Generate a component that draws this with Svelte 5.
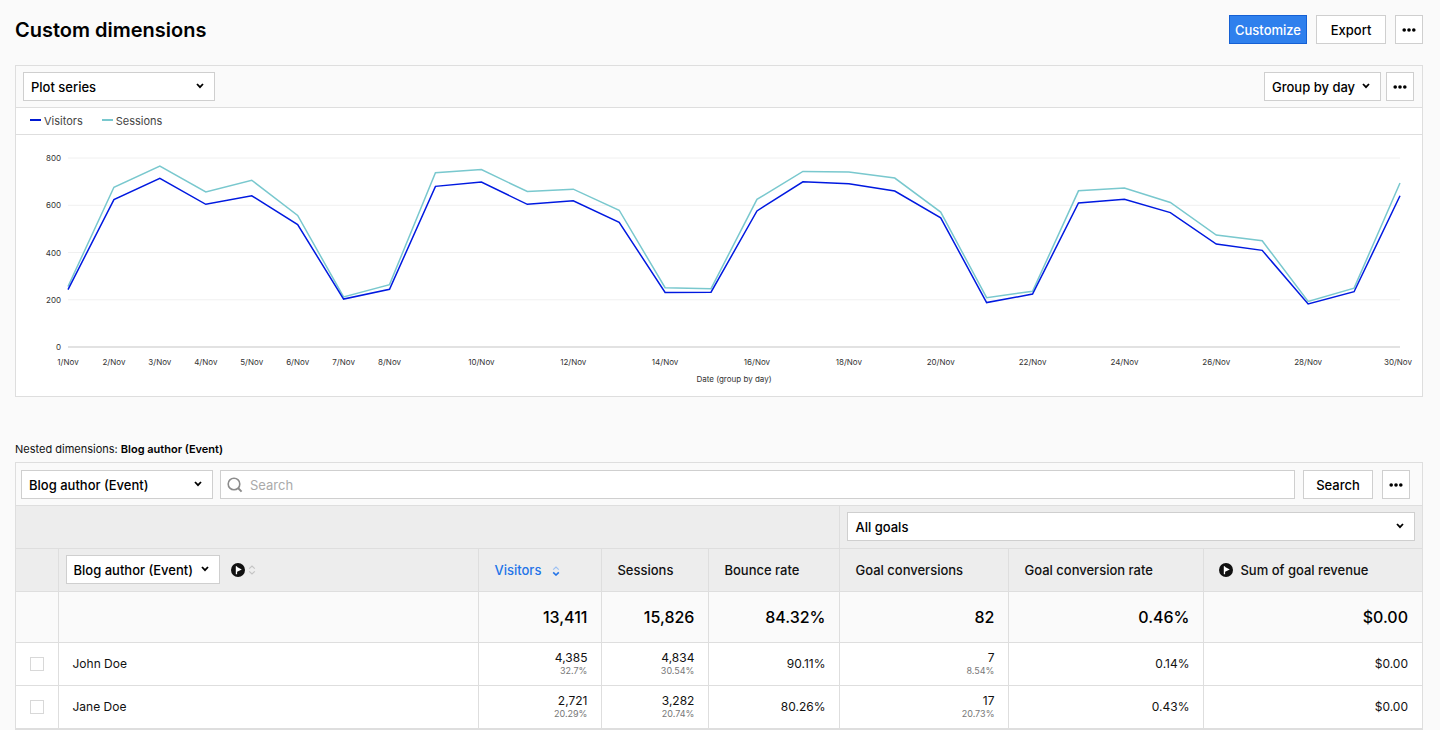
<script lang="ts">
  type Cell = { value: string; share?: string };

  const visitors = [
    243, 624, 714, 604, 640, 518, 203, 244, 680, 698, 604, 619, 528, 231, 232,
    576, 699, 691, 660, 547, 188, 224, 610, 625, 569, 436, 409, 182, 234, 640,
  ];
  const sessions = [
    256, 676, 766, 656, 706, 557, 212, 264, 738, 751, 658, 668, 579, 251, 247,
    625, 743, 741, 715, 571, 209, 236, 661, 673, 612, 474, 450, 193, 249, 694,
  ];
  const labelledDays = [1, 2, 3, 4, 5, 6, 7, 8, 10, 12, 14, 16, 18, 20, 22, 24, 26, 28, 30];
  const ticks = [0, 200, 400, 600, 800];

  const totals = ['13,411', '15,826', '84.32%', '82', '0.46%', '$0.00'];
  const rows: { name: string; cells: Cell[] }[] = [
    {
      name: 'John Doe',
      cells: [
        { value: '4,385', share: '32.7%' },
        { value: '4,834', share: '30.54%' },
        { value: '90.11%' },
        { value: '7', share: '8.54%' },
        { value: '0.14%' },
        { value: '$0.00' },
      ],
    },
    {
      name: 'Jane Doe',
      cells: [
        { value: '2,721', share: '20.29%' },
        { value: '3,282', share: '20.74%' },
        { value: '80.26%' },
        { value: '17', share: '20.73%' },
        { value: '0.43%' },
        { value: '$0.00' },
      ],
    },
  ];

  const chart = { left: 52, right: 22, top: 23, bottom: 212, height: 261 };
  let chartWidth = $state(1406);
  let query = $state('');

  let plotRight = $derived(chartWidth - chart.right);

  function x(day: number) {
    return chart.left + ((day - 1) / 29) * (plotRight - chart.left);
  }

  function y(value: number) {
    return chart.bottom - (value / 800) * (chart.bottom - chart.top);
  }

  function line(series: number[]) {
    return series.map((value, i) => `${x(i + 1)},${y(value)}`).join(' ');
  }
</script>

{#snippet chevron()}
  <svg class="chevron" width="8" height="6" viewBox="0 0 8 6" aria-hidden="true">
    <path d="M1 1l3 3.2L7 1" fill="none" stroke="#000" stroke-width="1.8" />
  </svg>
{/snippet}

{#snippet dots()}
  <svg width="14" height="4" viewBox="0 0 14 4" aria-hidden="true">
    <circle cx="2.2" cy="2" r="1.8" />
    <circle cx="7" cy="2" r="1.8" />
    <circle cx="11.8" cy="2" r="1.8" />
  </svg>
{/snippet}

{#snippet flag()}
  <svg class="flag" width="14" height="14" viewBox="0 0 14 14" aria-hidden="true">
    <circle cx="7" cy="7" r="7" fill="#111" />
    <path d="M4.8 3.2v8h1.3V8.8L10.8 6.4 6.1 4V3.2z" fill="#fff" />
  </svg>
{/snippet}

{#snippet sort()}
  <svg class="sort" width="8" height="10" viewBox="0 0 8 10" fill="none" aria-hidden="true">
    <path class="up" d="M1.2 3.6L4 1l2.8 2.6" />
    <path class="down" d="M1.2 6.4L4 9l2.8-2.6" />
  </svg>
{/snippet}

<main class="page">
  <header class="page-header">
    <h1>Custom dimensions</h1>
    <div class="actions">
      <button class="btn primary">Customize</button>
      <button class="btn">Export</button>
      <button class="btn icon" aria-label="More page actions">{@render dots()}</button>
    </div>
  </header>

  <section class="panel" aria-label="Chart">
    <div class="toolbar">
      <div class="select wide">
        <select aria-label="Plot series"><option>Plot series</option></select>
        {@render chevron()}
      </div>
      <div class="toolbar-end">
        <div class="select group">
          <select aria-label="Grouping"><option>Group by day</option></select>
          {@render chevron()}
        </div>
        <button class="btn icon" aria-label="More chart actions">{@render dots()}</button>
      </div>
    </div>

    <div class="legend">
      <span class="legend-item visitors">Visitors</span>
      <span class="legend-item sessions">Sessions</span>
    </div>

    <div class="chart" bind:clientWidth={chartWidth}>
      <svg width={chartWidth} height={chart.height} role="img" aria-label="Visitors and sessions by day">
        {#each ticks as tick}
          <line class="grid" class:axis={tick === 0} x1={chart.left} x2={plotRight} y1={y(tick)} y2={y(tick)} />
          <text x={chart.left - 7} y={y(tick) + 3} text-anchor="end">{tick}</text>
        {/each}
        <polyline class="series sessions" points={line(sessions)} />
        <polyline class="series visitors" points={line(visitors)} />
        {#each labelledDays as day}
          <text x={Math.min(x(day), chartWidth - 24)} y={chart.bottom + 18} text-anchor="middle">{day}/Nov</text>
        {/each}
        <text x={(chart.left + plotRight) / 2} y={chart.bottom + 35} text-anchor="middle">Date (group by day)</text>
      </svg>
    </div>
  </section>

  <p class="nested">Nested dimensions: <strong>Blog author (Event)</strong></p>

  <section class="panel" aria-label="Report table">
    <div class="toolbar table-toolbar">
      <div class="select wide">
        <select aria-label="Nested dimension"><option>Blog author (Event)</option></select>
        {@render chevron()}
      </div>
      <form class="search" onsubmit={(e) => e.preventDefault()}>
        <label class="search-box">
          <svg width="16" height="16" viewBox="0 0 16 16" fill="none" aria-hidden="true">
            <circle cx="7" cy="7" r="5.8" stroke="#8c8c8c" stroke-width="1.6" />
            <path d="M11 11l3.6 3.6" stroke="#8c8c8c" stroke-width="2" />
          </svg>
          <input type="text" placeholder="Search" aria-label="Search" bind:value={query} />
        </label>
        <button class="btn">Search</button>
      </form>
      <button class="btn icon" aria-label="More table actions">{@render dots()}</button>
    </div>

    <table>
      <colgroup>
        <col class="col-check" />
        <col />
        <col class="col-visitors" />
        <col class="col-sessions" />
        <col class="col-bounce" />
        <col class="col-conversions" />
        <col class="col-rate" />
        <col class="col-revenue" />
      </colgroup>
      <thead>
        <tr class="groups">
          <th colspan="5"></th>
          <th class="goals" colspan="3">
            <div class="select">
              <select aria-label="Goals"><option>All goals</option></select>
              {@render chevron()}
            </div>
          </th>
        </tr>
        <tr>
          <th></th>
          <th class="dimension">
            <div class="dimension-head">
              <div class="select fit">
                <select aria-label="Dimension"><option>Blog author (Event)</option></select>
                {@render chevron()}
              </div>
              {@render flag()}
              {@render sort()}
            </div>
          </th>
          <th class="sorted">Visitors {@render sort()}</th>
          <th>Sessions</th>
          <th>Bounce rate</th>
          <th>Goal conversions</th>
          <th>Goal conversion rate</th>
          <th>{@render flag()}Sum of goal revenue</th>
        </tr>
      </thead>
      <tbody>
        <tr class="totals">
          <td></td>
          <td></td>
          {#each totals as total}
            <td>{total}</td>
          {/each}
        </tr>
        {#each rows as row}
          <tr>
            <td class="check"><input type="checkbox" aria-label="Select {row.name}" /></td>
            <td class="name">{row.name}</td>
            {#each row.cells as cell}
              <td>
                {cell.value}
                {#if cell.share}<small>{cell.share}</small>{/if}
              </td>
            {/each}
          </tr>
        {/each}
      </tbody>
    </table>
  </section>
</main>

<style>
  :global(body) {
    margin: 0;
    background: #fafafa;
  }

  .page {
    padding: 15px 17px 0 15px;
    font-family: Inter, 'Liberation Sans', sans-serif;
    font-size: 13px;
    color: #111;
  }

  .page *,
  .page {
    box-sizing: border-box;
  }

  .page-header {
    display: flex;
    align-items: flex-start;
    justify-content: space-between;
    margin-bottom: 19px;
  }

  h1 {
    margin: 0;
    font-size: 20px;
    line-height: 31px;
    font-weight: 600;
    color: #000;
  }

  .actions {
    display: flex;
    gap: 9px;
  }

  .btn {
    display: inline-flex;
    align-items: center;
    justify-content: center;
    flex: none;
    min-width: 70px;
    height: 29px;
    padding: 0 5px;
    border: 1px solid #cfcfcf;
    background: #fff;
    font: 500 13px Inter, 'Liberation Sans', sans-serif;
    color: #000;
    cursor: pointer;
  }

  .btn.primary {
    background: #2f80ed;
    border-color: #1560d4;
    color: #fff;
  }

  .btn.icon {
    min-width: 28px;
    width: 28px;
  }

  .panel {
    border: 1px solid #dedede;
    background: #fff;
  }

  .toolbar {
    display: flex;
    justify-content: space-between;
    padding: 6px 8px 6px 7px;
    background: #fafafa;
    border-bottom: 1px solid #dedede;
  }

  .toolbar-end {
    display: flex;
    gap: 5px;
  }

  .select {
    position: relative;
  }

  .select.wide {
    flex: none;
    width: 192px;
  }

  .select.group {
    width: 117px;
  }

  .select.fit {
    width: 154px;
  }

  select {
    display: block;
    width: 100%;
    height: 29px;
    padding: 0 20px 0 7px;
    border: 1px solid #cfcfcf;
    border-radius: 0;
    background: #fff;
    appearance: none;
    font: 500 13px Inter, 'Liberation Sans', sans-serif;
    color: #000;
  }

  .chevron {
    position: absolute;
    top: 11px;
    right: 11px;
    pointer-events: none;
  }

  .legend {
    display: flex;
    gap: 19px;
    padding: 0 14px;
    border-bottom: 1px solid #dedede;
    font-size: 11px;
    line-height: 26px;
    color: #444;
  }

  .legend-item {
    display: flex;
    align-items: center;
    gap: 3px;
  }

  .legend-item::before {
    content: '';
    width: 11px;
    height: 2px;
    margin-bottom: 2px;
    background: currentColor;
  }

  .legend-item.visitors::before {
    color: #0019d2;
  }

  .legend-item.sessions::before {
    color: #79c8ce;
  }

  .chart {
    overflow: hidden;
  }

  .chart svg {
    display: block;
  }

  .chart text {
    font-size: 8px;
    fill: #333;
  }

  .grid {
    stroke: #f0f0f0;
    stroke-width: 1;
  }

  .grid.axis {
    stroke: #e2e2e2;
    stroke-width: 2;
  }

  .series {
    fill: none;
    stroke-width: 1.5;
  }

  .series.visitors {
    stroke: #0019e0;
  }

  .series.sessions {
    stroke: #79c8ce;
  }

  .nested {
    margin: 43px 0 4px;
    font-size: 11px;
    line-height: 18px;
  }

  .nested strong {
    font-weight: 600;
    color: #000;
  }

  .table-toolbar {
    gap: 7px;
    padding: 7px 12px 6px 5px;
  }

  .search {
    display: flex;
    flex: 1;
    gap: 8px;
    margin-right: 2px;
  }

  .search-box {
    display: flex;
    align-items: center;
    flex: 1;
    gap: 7px;
    padding: 0 6px;
    border: 1px solid #cfcfcf;
    background: #fff;
  }

  .search-box input {
    flex: 1;
    padding: 0;
    border: 0;
    outline: 0;
    background: none;
    font: 13px Inter, 'Liberation Sans', sans-serif;
  }

  .search-box input::placeholder {
    color: #aaa;
  }

  table {
    width: 100%;
    table-layout: fixed;
    border-collapse: collapse;
  }

  .col-check {
    width: 42px;
  }

  .col-visitors {
    width: 123px;
  }

  .col-sessions {
    width: 107px;
  }

  .col-bounce {
    width: 131px;
  }

  .col-conversions {
    width: 169px;
  }

  .col-rate {
    width: 195px;
  }

  .col-revenue {
    width: 218px;
  }

  th,
  td {
    height: 43px;
    padding: 0 14px;
    border-right: 1px solid #dedede;
    border-bottom: 1px solid #dedede;
  }

  th:last-child,
  td:last-child {
    border-right: 0;
  }

  th {
    padding: 0 15px;
    background: #ededed;
    font-weight: 500;
    text-align: left;
    white-space: nowrap;
  }

  .groups th {
    height: 42px;
  }

  th.goals,
  th.dimension {
    padding: 0 7px;
  }

  th.sorted {
    color: #2374e8;
  }

  .dimension-head {
    display: flex;
    align-items: center;
  }

  .dimension-head .flag {
    margin: 0 3px 0 11px;
  }

  th > .flag {
    margin-right: 7px;
    vertical-align: -2px;
  }

  .sort path {
    stroke: #c4c4c4;
    stroke-width: 1.2;
  }

  .sorted .sort {
    margin-left: 7px;
    vertical-align: -1px;
  }

  .sorted .sort .up {
    stroke: #9cc0f3;
  }

  .sorted .sort .down {
    stroke: #2374e8;
    stroke-width: 1.6;
  }

  td {
    font-size: 12px;
    line-height: 14px;
    text-align: right;
  }

  td small {
    display: block;
    font-size: 9px;
    line-height: 12px;
    color: #777;
  }

  .totals td {
    height: 51px;
    background: #fafafa;
    font-size: 16px;
    font-weight: 500;
    color: #000;
  }

  td.name {
    text-align: left;
  }

  td.check {
    padding: 0;
    text-align: center;
  }

  td.check input {
    display: block;
    width: 14px;
    height: 14px;
    margin: 0 auto;
    appearance: none;
    border: 1px solid #d8d8d8;
    background: #fff;
  }

  td.check input:checked {
    background: #2f80ed;
  }
</style>
